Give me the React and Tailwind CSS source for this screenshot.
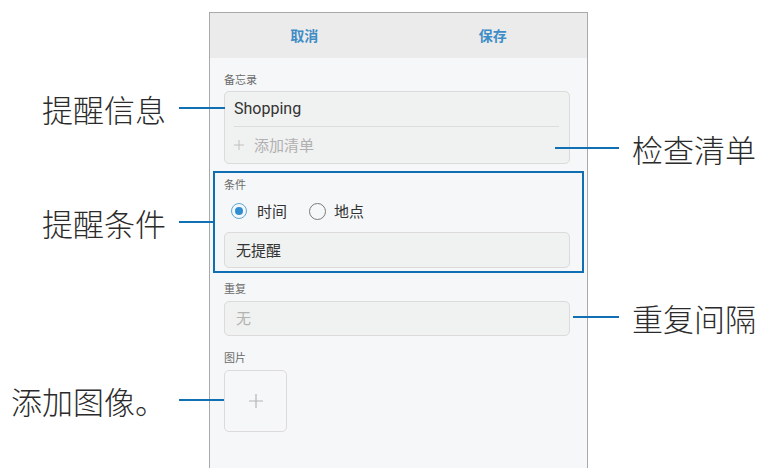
const cjk = { fontFamily: '"Noto Sans CJK SC", "Noto Sans", sans-serif' };

function Callout({ text, top, side, lineWidth, left, width }) {
  const line = <div className="h-[2px] bg-[#1170b3]" style={{ width: lineWidth }} />;
  return (
    <div
      className={`absolute flex items-center h-[40px] gap-[13px] ${side === "left" ? "justify-end" : "justify-start"}`}
      style={{ top: top - 20, left, width }}
    >
      {side === "right" && line}
      <span className="text-[31px] leading-none font-light text-[#2b2b2b] whitespace-nowrap">{text}</span>
      {side === "left" && line}
    </div>
  );
}

function Label({ children, className = "" }) {
  return <div className={`text-[11px] leading-[14px] text-[#6b6b6b] ${className}`}>{children}</div>;
}

function Radio({ checked, label }) {
  return (
    <div className="flex items-center">
      {checked ? (
        <div className="w-[16px] h-[16px] rounded-full border-[1.5px] border-[#5fa8db] flex items-center justify-center">
          <div className="w-[8px] h-[8px] rounded-full bg-[#2f8ed2]" />
        </div>
      ) : (
        <div className="w-[17px] h-[17px] rounded-full border-[1.5px] border-[#7a7a7a]" />
      )}
      <span className={`text-[15px] text-[#333] ${checked ? "ml-[10px]" : "ml-[8px]"}`}>{label}</span>
    </div>
  );
}

export default function App() {
  return (
    <div className="relative w-[760px] h-[468px] bg-white overflow-hidden" style={cjk}>
      <div className="absolute left-[209px] top-[12px] w-[379px] h-[456px] flex flex-col border-x border-t border-[#a9a9a9] bg-[#f5f7f8]">
        <div className="flex h-[45px] bg-[#ebebeb] items-center">
          <div className="flex-1 text-center text-[14px] font-semibold text-[#3f8dc6]">取消</div>
          <div className="flex-1 text-center text-[14px] font-semibold text-[#3f8dc6]">保存</div>
        </div>

        <div className="flex flex-col pl-[14px] pt-[14px]">
          <Label>备忘录</Label>
          <div className="mt-[5px] w-[346px] h-[73px] rounded-[5px] border border-[#dcdada] bg-[#f0f1f1] flex flex-col px-[9px]">
            <div className="h-[35px] flex items-center border-b border-[#dcdcdc] mr-[1px]">
              <span className="text-[16px] text-[#333]" style={{ fontFamily: '"Roboto", "Noto Sans", sans-serif' }}>
                Shopping
              </span>
            </div>
            <div className="flex-1 flex items-center text-[15px] text-[#b0b0b0]">
              <svg width="10" height="10" viewBox="0 0 10 10" className="mr-[10px]">
                <path d="M5 0v10M0 5h10" stroke="#c0c0c0" strokeWidth="1" />
              </svg>
              添加清单
            </div>
          </div>

          <div className="mt-[7px] -ml-[11px] w-[371px] border-2 border-[#0f6fb2] pl-[9px] pt-[4px] pb-[3px]">
            <Label>条件</Label>
            <div className="mt-[8px] h-[24px] flex items-center pl-[7px] gap-[22px]">
              <Radio checked label="时间" />
              <Radio label="地点" />
            </div>
            <div className="mt-[9px] w-[346px] h-[36px] rounded-[5px] border border-[#dcdada] bg-[#f0f1f1] flex items-center px-[11px] text-[15px] text-[#333]">
              无提醒
            </div>
          </div>

          <Label className="mt-[8px]">重复</Label>
          <div className="mt-[6px] w-[346px] h-[35px] rounded-[5px] border border-[#dcdada] bg-[#f0f1f1] flex items-center px-[11px] text-[15px] text-[#b3b3b3]">
            无
          </div>

          <Label className="mt-[14px]">图片</Label>
          <div className="mt-[6px] w-[63px] h-[62px] rounded-[5px] border border-[#dcdada] bg-[#f5f7f8] flex items-center justify-center">
            <svg width="16" height="16" viewBox="0 0 16 16">
              <path d="M8 1v14M1 8h14" stroke="#b5b5b5" strokeWidth="1.2" />
            </svg>
          </div>
        </div>
      </div>

      <Callout text="提醒信息" top={108} side="left" left={0} width={225} lineWidth={46} />
      <Callout text="提醒条件" top={222} side="left" left={0} width={213} lineWidth={34} />
      <Callout text="添加图像。" top={400} side="left" left={0} width={224} lineWidth={45} />
      <Callout text="检查清单" top={148} side="right" left={555} width={205} lineWidth={64} />
      <Callout text="重复间隔" top={317} side="right" left={573} width={187} lineWidth={46} />
    </div>
  );
}
